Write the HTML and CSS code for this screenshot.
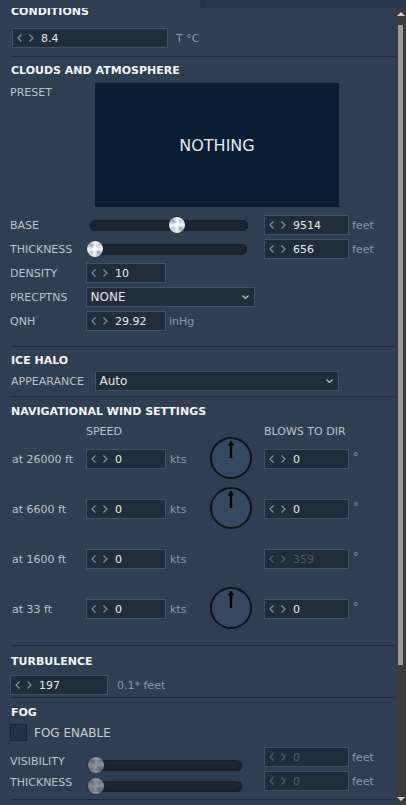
FILE: index.html
```html
<!DOCTYPE html>
<html>
<head>
<meta charset="utf-8">
<link rel="stylesheet" href="styles.css">
</head>
<body>
<div class="topbar"><div class="tb-left"></div><div class="tb-split"></div><div class="tb-right"></div></div>
<div class="main">
  <div class="content">
    <section class="sec s-cond">
      <h2 class="hd">CONDITIONS</h2>
      <div class="row r-temp">
        <div class="spin w-temp"><svg class="ch" width="17" height="8" viewBox="0 0 17 8"><path d="M4.5 0.5L1 4L4.5 7.5M12.5 0.5L16 4L12.5 7.5"/></svg><span>8.4</span></div>
        <span class="unit u-temp">T °C</span>
      </div>
    </section>

    <section class="sec s-clouds">
      <h2 class="hd">CLOUDS AND ATMOSPHERE</h2>
      <div class="row r-preset">
        <span class="lbl l-preset">PRESET</span>
        <div class="preset">NOTHING</div>
      </div>
      <div class="rows">
        <div class="row">
          <span class="lbl l-slide">BASE</span>
          <div class="slot">
            <div class="slider sl-base"><div class="track t-base"></div><div class="thumb th-base"></div></div>
          </div>
          <div class="spin w-dir"><svg class="ch" width="17" height="8" viewBox="0 0 17 8"><path d="M4.5 0.5L1 4L4.5 7.5M12.5 0.5L16 4L12.5 7.5"/></svg><span>9514</span></div>
          <span class="unit u-feet">feet</span>
        </div>
        <div class="row">
          <span class="lbl l-slide">THICKNESS</span>
          <div class="slot">
            <div class="slider sl-thick"><div class="track"></div><div class="thumb"></div></div>
          </div>
          <div class="spin w-dir"><svg class="ch" width="17" height="8" viewBox="0 0 17 8"><path d="M4.5 0.5L1 4L4.5 7.5M12.5 0.5L16 4L12.5 7.5"/></svg><span>656</span></div>
          <span class="unit u-feet">feet</span>
        </div>
        <div class="row">
          <span class="lbl l-field">DENSITY</span>
          <div class="spin w-small"><svg class="ch" width="17" height="8" viewBox="0 0 17 8"><path d="M4.5 0.5L1 4L4.5 7.5M12.5 0.5L16 4L12.5 7.5"/></svg><span>10</span></div>
        </div>
        <div class="row">
          <span class="lbl l-field">PRECPTNS</span>
          <div class="select w-prec"><span>NONE</span><svg class="dd" width="7" height="4" viewBox="0 0 7 4"><path d="M0.5 0.5L3.5 3.5L6.5 0.5"/></svg></div>
        </div>
        <div class="row">
          <span class="lbl l-field">QNH</span>
          <div class="spin w-small"><svg class="ch" width="17" height="8" viewBox="0 0 17 8"><path d="M4.5 0.5L1 4L4.5 7.5M12.5 0.5L16 4L12.5 7.5"/></svg><span>29.92</span></div>
          <span class="unit u-qnh">inHg</span>
        </div>
      </div>
    </section>

    <section class="sec s-halo">
      <h2 class="hd">ICE HALO</h2>
      <div class="row r-appear">
        <span class="lbl l-appear">APPEARANCE</span>
        <div class="select w-appear"><span>Auto</span><svg class="dd" width="7" height="4" viewBox="0 0 7 4"><path d="M0.5 0.5L3.5 3.5L6.5 0.5"/></svg></div>
      </div>
    </section>

    <section class="sec s-wind">
      <h2 class="hd">NAVIGATIONAL WIND SETTINGS</h2>
      <div class="colhead"><span class="ch-speed">SPEED</span><span>BLOWS TO DIR</span></div>
      <div class="wrows">
        <div class="wrow">
          <span class="lbl l-wind">at 26000 ft</span>
          <div class="spin w-small"><svg class="ch" width="17" height="8" viewBox="0 0 17 8"><path d="M4.5 0.5L1 4L4.5 7.5M12.5 0.5L16 4L12.5 7.5"/></svg><span>0</span></div>
          <span class="unit kts">kts</span>
          <svg class="dial" width="42" height="42" viewBox="0 0 42 42"><circle cx="21" cy="21" r="20" class="dial-c"/><line x1="21" y1="21" x2="21" y2="7" class="dial-l"/><path d="M17.7 8.5L21 3.6L24.3 8.5Z" class="dial-h"/></svg>
          <div class="spin w-dir"><svg class="ch" width="17" height="8" viewBox="0 0 17 8"><path d="M4.5 0.5L1 4L4.5 7.5M12.5 0.5L16 4L12.5 7.5"/></svg><span>0</span></div>
          <span class="deg">°</span>
        </div>
        <div class="wrow">
          <span class="lbl l-wind">at 6600 ft</span>
          <div class="spin w-small"><svg class="ch" width="17" height="8" viewBox="0 0 17 8"><path d="M4.5 0.5L1 4L4.5 7.5M12.5 0.5L16 4L12.5 7.5"/></svg><span>0</span></div>
          <span class="unit kts">kts</span>
          <svg class="dial" width="42" height="42" viewBox="0 0 42 42"><circle cx="21" cy="21" r="20" class="dial-c"/><line x1="21" y1="21" x2="21" y2="7" class="dial-l"/><path d="M17.7 8.5L21 3.6L24.3 8.5Z" class="dial-h"/></svg>
          <div class="spin w-dir"><svg class="ch" width="17" height="8" viewBox="0 0 17 8"><path d="M4.5 0.5L1 4L4.5 7.5M12.5 0.5L16 4L12.5 7.5"/></svg><span>0</span></div>
          <span class="deg">°</span>
        </div>
        <div class="wrow">
          <span class="lbl l-wind">at 1600 ft</span>
          <div class="spin w-small"><svg class="ch" width="17" height="8" viewBox="0 0 17 8"><path d="M4.5 0.5L1 4L4.5 7.5M12.5 0.5L16 4L12.5 7.5"/></svg><span>0</span></div>
          <span class="unit kts">kts</span>
          <div class="dial-gap"></div>
          <div class="spin w-dir disabled"><svg class="ch" width="17" height="8" viewBox="0 0 17 8"><path d="M4.5 0.5L1 4L4.5 7.5M12.5 0.5L16 4L12.5 7.5"/></svg><span>359</span></div>
          <span class="deg">°</span>
        </div>
        <div class="wrow">
          <span class="lbl l-wind">at 33 ft</span>
          <div class="spin w-small"><svg class="ch" width="17" height="8" viewBox="0 0 17 8"><path d="M4.5 0.5L1 4L4.5 7.5M12.5 0.5L16 4L12.5 7.5"/></svg><span>0</span></div>
          <span class="unit kts">kts</span>
          <svg class="dial" width="42" height="42" viewBox="0 0 42 42"><circle cx="21" cy="21" r="20" class="dial-c"/><line x1="21" y1="21" x2="21" y2="7" class="dial-l"/><path d="M17.7 8.5L21 3.6L24.3 8.5Z" class="dial-h"/></svg>
          <div class="spin w-dir"><svg class="ch" width="17" height="8" viewBox="0 0 17 8"><path d="M4.5 0.5L1 4L4.5 7.5M12.5 0.5L16 4L12.5 7.5"/></svg><span>0</span></div>
          <span class="deg">°</span>
        </div>
      </div>
    </section>

    <section class="sec s-turb">
      <h2 class="hd">TURBULENCE</h2>
      <div class="row r-turb">
        <div class="spin w-turb"><svg class="ch" width="17" height="8" viewBox="0 0 17 8"><path d="M4.5 0.5L1 4L4.5 7.5M12.5 0.5L16 4L12.5 7.5"/></svg><span>197</span></div>
        <span class="unit u-turb">0.1* feet</span>
      </div>
    </section>

    <section class="sec s-fog">
      <h2 class="hd">FOG</h2>
      <div class="row r-check">
        <div class="checkbox"></div>
        <span class="check-lbl">FOG ENABLE</span>
      </div>
      <div class="fog">
        <div class="fog-left">
          <div class="frow">
            <span class="lbl l-fog">VISIBILITY</span>
            <div class="slider sl-fog"><div class="track"></div><div class="thumb dim"></div></div>
          </div>
          <div class="frow">
            <span class="lbl l-fog">THICKNESS</span>
            <div class="slider sl-fog"><div class="track"></div><div class="thumb dim"></div></div>
          </div>
        </div>
        <div class="fog-right">
          <div class="row">
            <div class="spin w-dir disabled"><svg class="ch" width="17" height="8" viewBox="0 0 17 8"><path d="M4.5 0.5L1 4L4.5 7.5M12.5 0.5L16 4L12.5 7.5"/></svg><span>0</span></div>
            <span class="unit u-feet">feet</span>
          </div>
          <div class="row">
            <div class="spin w-dir disabled"><svg class="ch" width="17" height="8" viewBox="0 0 17 8"><path d="M4.5 0.5L1 4L4.5 7.5M12.5 0.5L16 4L12.5 7.5"/></svg><span>0</span></div>
            <span class="unit u-feet">feet</span>
          </div>
        </div>
      </div>
    </section>
  </div>
  <div class="scrollbar">
    <div class="sb-up"><div class="tri-up"></div></div>
    <div class="sb-thumb"></div>
    <div class="sb-down"><div class="tri-down"></div></div>
  </div>
</div>
</body>
</html>
```

FILE: styles.css
```css
* { box-sizing: border-box; margin: 0; padding: 0; }
html, body { width: 406px; height: 805px; overflow: hidden; }
body {
  background: #2f3e51;
  font-family: "DejaVu Sans", "Liberation Sans", sans-serif;
  font-size: 11px;
  color: #bcc3cb;
}

/* top strip */
.topbar { display: flex; height: 8px; }
.tb-left { width: 200px; background: #2f3e51; }
.tb-split { width: 6px; background: #243447; }
.tb-right { flex: 1; background: #2a394b; }

.main { display: flex; height: 797px; }
.content { flex: 1; overflow: hidden; }

/* sections */
.sec { margin-left: 10px; }
.sec::after { content: ""; display: block; height: 1px; background: #1f2b3a; margin-left: 1px; }
.hd {
  font-size: 11px; font-weight: bold; color: #f3f5f7;
  line-height: 14px; height: 14px; padding-left: 1px;
}
.row { display: flex; align-items: center; height: 20px; }
.lbl { color: #bcc3cb; white-space: nowrap; flex: none; }
.unit { color: #8d98a5; white-space: nowrap; }

/* spin boxes */
.spin {
  display: flex; align-items: center; flex: none;
  height: 20px; background: #212d3b; border: 1px solid #3f516a;
  padding-left: 4px; color: #e8eaec; font-size: 11px;
}
.spin .ch { flex: none; margin-right: 7px; color: #8894a2; }
.ch path { fill: none; stroke: currentColor; stroke-width: 1.1; }
.spin.disabled { color: #4f5b69; }
.spin.disabled .ch { color: #56626f; }

/* selects */
.select {
  display: flex; align-items: center; justify-content: space-between; flex: none;
  height: 20px; background: #212d3b; border: 1px solid #3f516a;
  padding: 0 5px 0 3.5px; color: #e2e5e8; font-size: 12px;
}
.dd path { fill: none; stroke: #c2c8cf; stroke-width: 1.1; }

/* conditions */
.s-cond .hd { margin-top: -3px; }
.r-temp { margin-top: 9px; }
.w-temp { width: 156px; margin-left: 2px; }
.u-temp { margin-left: 8px; }
.s-cond::after { margin-top: 8px; }

/* clouds */
.s-clouds .hd { margin-top: 7px; }
.r-preset { margin-top: 5px; height: auto; align-items: flex-start; }
.l-preset { width: 85px; margin-top: 3px; line-height: 14px; }
.preset {
  width: 244px; height: 124px; background: #0a1d35;
  display: flex; align-items: center; justify-content: center;
  color: #e4e8ee; font-size: 16px;
}
.rows { display: flex; flex-direction: column; gap: 4px; margin-top: 8px; }
.l-slide { width: 77px; }
.l-field { width: 76px; }
.slot { width: 177px; flex: none; display: flex; align-items: center; }
.slider { position: relative; height: 16px; display: flex; align-items: center; flex: none; }
.sl-base { width: 161px; }
.sl-thick { width: 160px; }
.track {
  flex: 1; height: 11px; border-radius: 6px;
  background: #1b2430;
  box-shadow: inset 0 0 0 2px #19212c, inset 0 1px 0 2px #1f2935;
}
.t-base { margin-left: 3px; }
.thumb {
  position: absolute; left: 0; top: 0; width: 16px; height: 16px; border-radius: 50%;
  background:
    radial-gradient(circle, rgba(255,255,255,0.95) 0 1.5px, rgba(255,255,255,0) 4px),
    conic-gradient(#f3f5f9 0deg, #c4cbd5 45deg, #f3f5f9 90deg, #9ea8b7 135deg, #eef1f5 180deg, #c4cbd5 225deg, #f3f5f9 270deg, #9ea8b7 315deg, #f3f5f9 360deg);
  box-shadow: 0 0 0 1px rgba(20,28,38,0.35);
}
.th-base { left: 82px; }
.thumb.dim { opacity: 0.5; }
.w-dir { width: 85px; }
.w-small { width: 80px; }
.u-feet { margin-left: 3px; }
.w-prec { width: 169px; }
.u-qnh { margin-left: 3px; }
.s-clouds::after { margin-top: 15px; }

/* ice halo */
.s-halo .hd { margin-top: 7px; }
.r-appear { margin-top: 3px; }
.l-appear { width: 85px; padding-left: 1px; }
.w-appear { width: 244px; }
.s-halo::after { margin-top: 5px; }

/* wind */
.s-wind .hd { margin-top: 8px; }
.colhead { display: flex; margin-top: 7px; height: 12px; line-height: 12px; color: #bcc3cb; }
.ch-speed { width: 254px; padding-left: 76px; }
.wrows { display: flex; flex-direction: column; gap: 8px; margin-top: -1px; }
.wrow { display: flex; align-items: center; height: 42px; }
.wrow > .lbl, .wrow > .spin, .wrow > .kts { margin-top: 2px; }
.l-wind { width: 76px; padding-left: 2px; }
.kts { width: 40px; margin-left: 4px; }
.dial { flex: none; }
.dial-c { fill: #36485f; stroke: #0f1419; stroke-width: 2; }
.dial-l { stroke: #000; stroke-width: 2.4; }
.dial-h { fill: #000; }
.dial-gap { width: 42px; flex: none; }
.wrow > .dial, .wrow > .dial-gap { margin-right: 12px; }
.deg { margin: 0 0 3px 4px; color: #8d98a5; }
.s-wind::after { margin-top: 16px; }

/* turbulence */
.s-turb .hd { margin-top: 9px; }
.r-turb { margin-top: 6px; }
.w-turb { width: 98px; }
.u-turb { margin-left: 9px; }
.s-turb::after { margin-top: 2px; }

/* fog */
.s-fog .hd { margin-top: 8px; }
.r-check { margin-top: 4px; height: 17px; }
.checkbox { width: 17px; height: 17px; background: #243244; border: 1px solid #1b2634; flex: none; }
.check-lbl { margin-left: 7px; font-size: 12px; color: #c6ccd2; }
.fog { display: flex; margin-top: 6px; }
.fog-left { width: 254px; margin-top: 6px; display: flex; flex-direction: column; }
.frow { display: flex; align-items: center; height: 21px; }
.l-fog { width: 78px; margin-bottom: 4px; }
.sl-fog { width: 154px; margin-top: 3px; }
.fog-right { display: flex; flex-direction: column; gap: 4px; }
.s-fog::after { margin-top: 4px; }

/* scrollbar */
.scrollbar {
  width: 11px; flex: none; margin-top: 1px; background: #3b3b3b;
  display: flex; flex-direction: column; align-items: center;
}
.sb-up { height: 16px; display: flex; justify-content: center; padding-top: 3px; }
.tri-up { width: 0; height: 0; border-left: 4px solid transparent; border-right: 4px solid transparent; border-bottom: 4px solid #cfcfcf; }
.sb-thumb { width: 5px; height: 644px; background: #9d9d9d; }
.sb-down { margin-top: 132px; height: 8px; display: flex; justify-content: center; }
.tri-down { width: 0; height: 0; border-left: 4px solid transparent; border-right: 4px solid transparent; border-top: 4px solid #cfcfcf; }
```
